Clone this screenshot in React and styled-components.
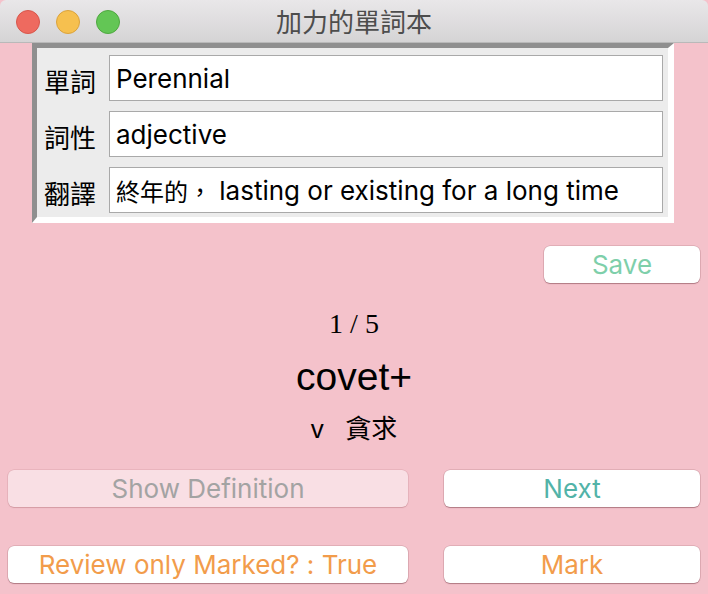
import React from "react";
import styled, { createGlobalStyle } from "styled-components";

const GlobalStyle = createGlobalStyle`
  html, body {
    margin: 0;
    padding: 0;
    background: #f4c2cb;
    overflow: hidden;
  }
  * { box-sizing: border-box; }
`;

const SANS = `"Liberation Sans", Arial, "Noto Sans CJK TC", sans-serif`;
const UI = `Inter, "Liberation Sans", "Noto Sans CJK TC", sans-serif`;
const CJK = `"Noto Sans CJK TC", "Liberation Sans", sans-serif`;

const Window = styled.div`
  width: 708px;
  height: 594px;
  display: flex;
  flex-direction: column;
  background: #f4c2cb;
  font-family: ${SANS};
`;

const TitleBar = styled.div`
  height: 43px;
  display: grid;
  grid-template-columns: 1fr auto 1fr;
  align-items: center;
  background: linear-gradient(#e9e7e9, #d5d4d5);
  border-bottom: 1px solid #b9b9b9;
  border-radius: 6px 6px 0 0;
`;

const Lights = styled.div`
  display: flex;
  gap: 16px;
  padding-left: 16px;
  padding-top: 1px;
`;

const Light = styled.span`
  width: 24px;
  height: 24px;
  border-radius: 50%;
  background: ${(p) => p.$fill};
  border: 1px solid ${(p) => p.$edge};
`;

const Title = styled.div`
  font-family: ${CJK};
  font-size: 26px;
  color: #4d4d4d;
  line-height: 30px;
`;

const Panel = styled.div`
  margin-left: 32px;
  width: 642px;
  height: 180px;
  border-style: solid;
  border-width: 5px 6px 6px 5px;
  border-color: #8f8f8f #ffffff #ffffff #8f8f8f;
  background: #ececec;
  padding: 7px 5px 4px 7px;
  display: flex;
  flex-direction: column;
  gap: 10px;
`;

const EntryRow = styled.div`
  display: flex;
  align-items: center;
  gap: 13px;
  height: 46px;
`;

const FieldLabel = styled.span`
  font-family: ${SANS};
  font-size: 26px;
  line-height: 30px;
  color: #000;
  margin-top: 10px;
  width: 52px;
  white-space: nowrap;
`;

const Entry = styled.div`
  flex: 1;
  height: 46px;
  border: 1px solid #a9a9a9;
  background: #fff;
  padding: 0 6px;
  font-family: ${UI};
  font-feature-settings: "calt" 0;
  font-size: 26px;
  color: #000;
  display: flex;
  align-items: center;
  white-space: pre;
  overflow: hidden;
`;

const CjkRun = styled.span`
  font-family: ${CJK};
  font-size: 24px;
`;

const SaveRow = styled.div`
  margin-top: 23px;
  display: flex;
  justify-content: flex-end;
  padding-right: 8px;
`;

const Button = styled.div`
  width: ${(p) => p.$w}px;
  height: 37px;
  border-radius: 6px;
  background: ${(p) => (p.$disabled ? "#f9dfe4" : "#ffffff")};
  box-shadow: ${(p) =>
    p.$disabled
      ? "0 0 0 0.5px rgba(160, 90, 100, 0.25), 0 1px 1px rgba(150, 80, 90, 0.25)"
      : "0 0 0 0.5px rgba(120, 60, 70, 0.3), 0 1px 1px rgba(120, 60, 70, 0.45)"};
  color: ${(p) => p.$color};
  font-family: ${UI};
  font-feature-settings: "calt" 0;
  font-size: 26px;
  display: flex;
  align-items: center;
  justify-content: center;
  white-space: nowrap;
`;

const Counter = styled.div`
  margin-top: 25px;
  font-family: "Liberation Serif", "Times New Roman", serif;
  font-size: 28px;
  line-height: 32px;
  text-align: center;
  color: #000;
`;

const Word = styled.div`
  margin-top: 15px;
  font-family: ${SANS};
  font-size: 39px;
  line-height: 44px;
  text-align: center;
  color: #000;
`;

const Meaning = styled.div`
  margin-top: 15px;
  font-family: ${SANS};
  font-size: 26px;
  line-height: 30px;
  text-align: center;
  color: #000;
  white-space: pre;
`;

const ButtonGrid = styled.div`
  margin-top: 26px;
  padding: 0 8px;
  display: grid;
  grid-template-columns: 400px 256px;
  column-gap: 36px;
  row-gap: 39px;
`;

export default function App() {
  return (
    <Window>
      <GlobalStyle />
      <TitleBar>
        <Lights>
          <Light $fill="#ee6a5f" $edge="#d8564b" />
          <Light $fill="#f6c04f" $edge="#dba33c" />
          <Light $fill="#63c655" $edge="#4fa840" />
        </Lights>
        <Title>加力的單詞本</Title>
        <div />
      </TitleBar>
      <Panel>
        <EntryRow>
          <FieldLabel>單詞</FieldLabel>
          <Entry>Perennial</Entry>
        </EntryRow>
        <EntryRow>
          <FieldLabel>詞性</FieldLabel>
          <Entry>adjective</Entry>
        </EntryRow>
        <EntryRow>
          <FieldLabel>翻譯</FieldLabel>
          <Entry>
            <CjkRun>終年的，</CjkRun>
            {" lasting or existing for a long time"}
          </Entry>
        </EntryRow>
      </Panel>
      <SaveRow>
        <Button $w={156} $color="#7ecfaa">Save</Button>
      </SaveRow>
      <Counter>1 / 5</Counter>
      <Word>covet+</Word>
      <Meaning>{"v   貪求"}</Meaning>
      <ButtonGrid>
        <Button $w={400} $disabled $color="#a3a3a3">Show Definition</Button>
        <Button $w={256} $color="#52b3a8">Next</Button>
        <Button $w={400} $color="#f29c4b">Review only Marked? : True</Button>
        <Button $w={256} $color="#f29c4b">Mark</Button>
      </ButtonGrid>
    </Window>
  );
}
